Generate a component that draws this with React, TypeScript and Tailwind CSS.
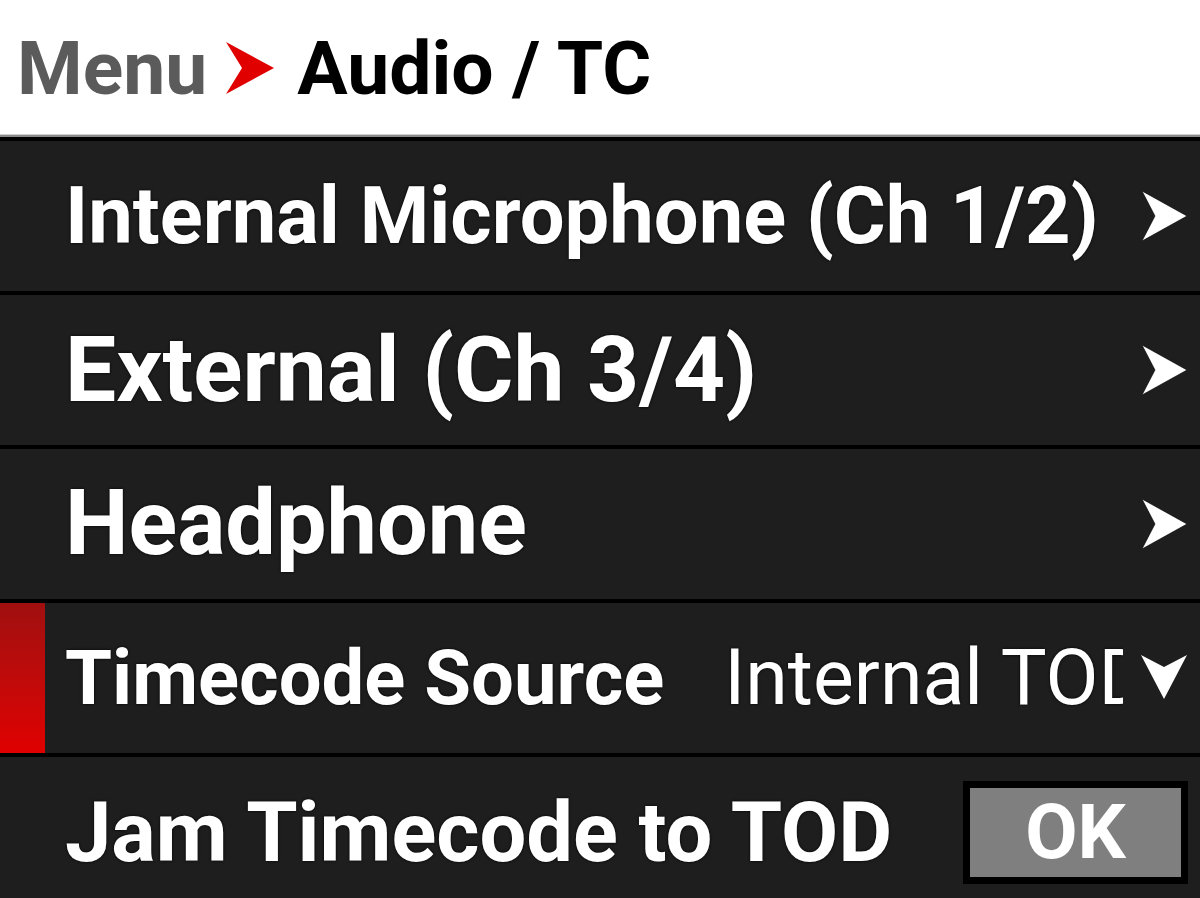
import React from "react";

const RightArrow = () => (
  <svg width="45" height="50" viewBox="0 0 45 50" className="shrink-0">
    <path d="M0 0 L45 25 L0 50 L13 25 Z" fill="#ffffff" stroke="#000" strokeWidth="0.6" />
  </svg>
);

const DownArrow = () => (
  <svg width="46" height="46" viewBox="0 0 46 46" className="shrink-0">
    <path d="M0 0 L23 44 L46 0 L23 12 Z" fill="#ffffff" />
  </svg>
);

const Row = ({
  children,
  selected = false,
}: {
  children: React.ReactNode;
  selected?: boolean;
}) => (
  <div className="flex h-[150px] shrink-0 items-stretch bg-[#1e1e1e]">
    <div
      className={
        selected
          ? "w-[45px] shrink-0 bg-gradient-to-b from-[#a00f0f] to-[#e00000]"
          : "w-[45px] shrink-0"
      }
    />
    <div className="flex min-w-0 flex-1 items-center pl-[20px] pr-[13px]">
      {children}
    </div>
  </div>
);

const Sep = () => <div className="h-[4px] shrink-0 bg-black" />;

export default function App() {
  return (
    <div
      className="flex h-[898px] w-[1200px] flex-col overflow-hidden bg-[#1e1e1e]"
      style={{ fontFamily: "Roboto, 'Noto Sans', sans-serif" }}
    >
      <div className="flex h-[134px] shrink-0 items-center bg-white pl-[17px] pt-[2px]">
        <span className="text-[75px] font-bold leading-none text-[#5b5b5b]">
          Menu
        </span>
        <svg width="48" height="52" viewBox="0 0 48 52" className="ml-[19px] mr-[23px]">
          <path d="M0 0 L48 26 L0 52 L16 26 Z" fill="#e00000" />
        </svg>
        <span className="text-[75px] font-bold leading-none text-black">
          Audio / TC
        </span>
      </div>
      <div className="h-[1px] shrink-0 bg-[#cfcfcf]" />
      <div className="h-[2px] shrink-0 bg-[#8a8a8a]" />
      <div className="h-[4px] shrink-0 bg-black" />

      <Row>
        <span className="flex-1 whitespace-nowrap text-[79.5px] font-bold leading-none text-white [text-shadow:0_0_3px_#000]">
          Internal Microphone (Ch 1/2)
        </span>
        <RightArrow />
      </Row>
      <Sep />
      <Row>
        <span className="flex-1 whitespace-nowrap text-[91px] font-bold leading-none text-white [text-shadow:0_0_3px_#000]">
          External (Ch 3/4)
        </span>
        <RightArrow />
      </Row>
      <Sep />
      <Row>
        <span className="flex-1 whitespace-nowrap text-[90px] font-bold leading-none text-white [text-shadow:0_0_3px_#000]">
          Headphone
        </span>
        <RightArrow />
      </Row>
      <Sep />
      <Row selected>
        <span className="whitespace-nowrap text-[76px] font-bold leading-none text-white [text-shadow:0_0_3px_#000]">
          Timecode Source
        </span>
        <div className="ml-[60px] min-w-0 flex-1 overflow-hidden">
          <span className="whitespace-nowrap text-[77px] font-normal leading-none text-white [text-shadow:0_0_3px_#000]">
            Internal TOD
          </span>
        </div>
        <div className="ml-[18px]">
          <DownArrow />
        </div>
      </Row>
      <Sep />
      <Row>
        <span className="flex-1 whitespace-nowrap text-[83px] font-bold leading-none text-white [text-shadow:0_0_3px_#000]">
          Jam Timecode to TOD
        </span>
        <div className="mr-[-1px] flex h-[103px] w-[225px] items-center justify-center border-[7px] border-black bg-[#7f7f7f]">
          <span className="text-[76px] font-bold leading-none text-white">OK</span>
        </div>
      </Row>
    </div>
  );
}
